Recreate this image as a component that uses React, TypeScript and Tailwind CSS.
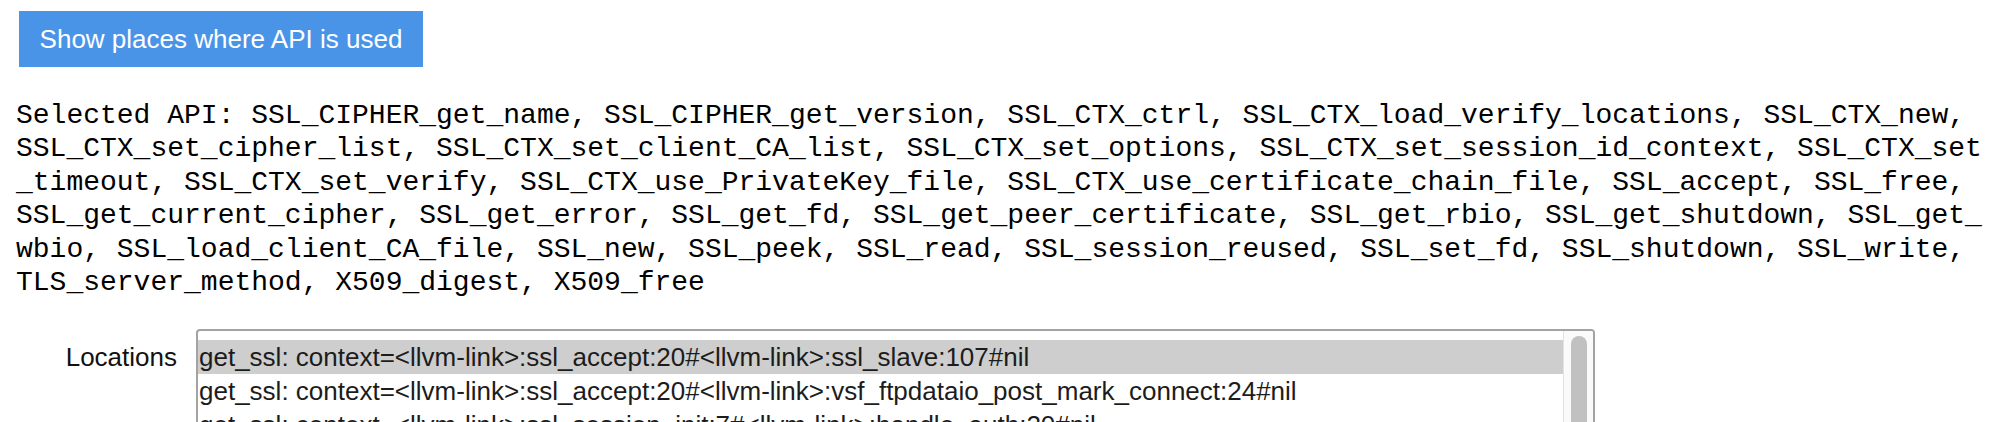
import React from "react";

const apis = [
  "SSL_CIPHER_get_name",
  "SSL_CIPHER_get_version",
  "SSL_CTX_ctrl",
  "SSL_CTX_load_verify_locations",
  "SSL_CTX_new",
  "SSL_CTX_set_cipher_list",
  "SSL_CTX_set_client_CA_list",
  "SSL_CTX_set_options",
  "SSL_CTX_set_session_id_context",
  "SSL_CTX_set_timeout",
  "SSL_CTX_set_verify",
  "SSL_CTX_use_PrivateKey_file",
  "SSL_CTX_use_certificate_chain_file",
  "SSL_accept",
  "SSL_free",
  "SSL_get_current_cipher",
  "SSL_get_error",
  "SSL_get_fd",
  "SSL_get_peer_certificate",
  "SSL_get_rbio",
  "SSL_get_shutdown",
  "SSL_get_wbio",
  "SSL_load_client_CA_file",
  "SSL_new",
  "SSL_peek",
  "SSL_read",
  "SSL_session_reused",
  "SSL_set_fd",
  "SSL_shutdown",
  "SSL_write",
  "TLS_server_method",
  "X509_digest",
  "X509_free",
];

const locations = [
  "get_ssl: context=<llvm-link>:ssl_accept:20#<llvm-link>:ssl_slave:107#nil",
  "get_ssl: context=<llvm-link>:ssl_accept:20#<llvm-link>:vsf_ftpdataio_post_mark_connect:24#nil",
  "get_ssl: context=<llvm-link>:ssl_session_init:7#<llvm-link>:handle_auth:20#nil",
  "get_ssl: context=<llvm-link>:ssl_read:12#<llvm-link>:ftp_read_data:31#nil",
  "get_ssl: context=<llvm-link>:ssl_write:9#<llvm-link>:ftp_write_data:18#nil",
];

export default function App() {
  const selected = 0;
  const selectedText = "Selected API: " + apis.join(", ");

  return (
    <div className="w-full min-h-screen bg-white px-4 pt-[11px] font-['Liberation_Sans',Arial,sans-serif] text-black">
      <button className="ml-[3px] h-[56px] w-[404px] bg-[#4a94e8] text-[26px] leading-none text-white">
        Show places where API is used
      </button>

      <div className="mt-[32px] break-all font-['Liberation_Mono','Courier_New',monospace] text-[28px] leading-[33.4px] text-black">
        {selectedText}
      </div>

      <div className="mt-[30px] flex items-start">
        <div className="mr-[19px] w-[161px] pt-[11px] text-right text-[26px] leading-[34px] text-[#111]">
          Locations
        </div>
        <div className="flex h-[300px] w-[1399px] overflow-hidden rounded-t-[4px] border-2 border-[#a3a3a3] bg-white">
          <div className="flex-1 pt-[9px]">
            {locations.map((loc, i) => (
              <div
                key={i}
                className={
                  "h-[34px] whitespace-nowrap pl-[1px] text-[26px] leading-[34px] text-[#1c1c1c] " +
                  (i === selected ? "bg-[#cecece]" : "")
                }
              >
                {loc}
              </div>
            ))}
          </div>
          <div className="w-[30px] border-l border-[#e2e2e2] bg-[#fafafa] pl-[7px] pt-[5px]">
            <div className="h-[220px] w-[16px] rounded-full bg-[#c1c1c1]" />
          </div>
        </div>
      </div>
    </div>
  );
}
